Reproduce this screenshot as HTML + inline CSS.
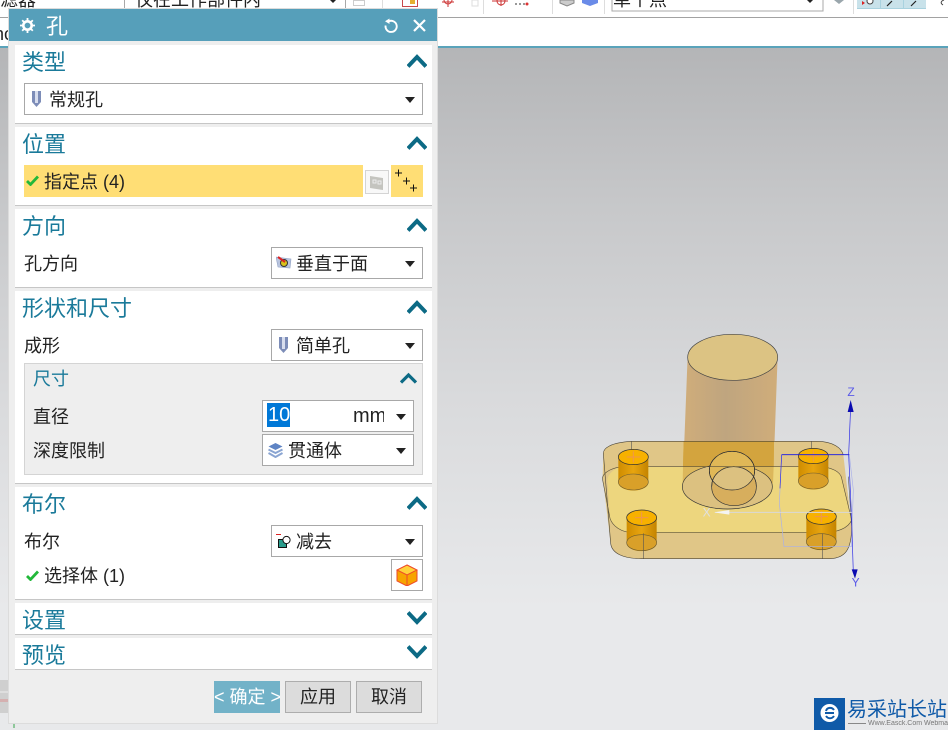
<!DOCTYPE html>
<html lang="zh"><head><meta charset="utf-8"><title>孔</title>
<style>
html,body{margin:0;padding:0}
body{width:948px;height:730px;position:relative;overflow:hidden;background:#fff;font-family:"Liberation Sans","Noto Sans CJK SC",sans-serif;color:#222}
.a{position:absolute}
.t{position:absolute;white-space:nowrap;line-height:24px;font-size:18px}
.sec{position:absolute;left:15px;width:417px;background:#fff;box-shadow:0 1px 0 #c6c6c6}
.h{position:absolute;left:22px;font-size:22px;line-height:30px;color:#1a7a9a;white-space:nowrap}
.sel{position:absolute;box-sizing:border-box;border:1px solid #a8a8a8;background:#fff;height:32px}
.sel:after{content:"";position:absolute;right:7px;top:13px;border-left:5.5px solid transparent;border-right:5.5px solid transparent;border-top:6px solid #222}
.chev{position:absolute;left:407px}
.btn{position:absolute;top:681px;width:66px;height:32px;box-sizing:border-box;border:1px solid #adadad;background:#dcdcdc;text-align:center;font-size:18px;line-height:31px}
</style></head><body>
<!-- toolbar -->
<div class="a" style="left:0;top:0;width:948px;height:17px;overflow:hidden;background:#fff">
<div class="t" style="left:-18px;top:-12px;font-size:18px">过滤器</div>
<div class="a" style="left:124px;top:-2px;width:220px;height:11px;border-right:1px solid #a8a8a8;border-left:1px solid #a8a8a8"></div>
<div class="t" style="left:135px;top:-12px">仅在工作部件内</div>
<div class="a" style="left:330px;top:0;border-left:3px solid transparent;border-right:3px solid transparent;border-top:3px solid #222"></div>
<div class="a" style="left:353px;top:0;width:12px;height:6px;border:1px solid #ccc;box-sizing:border-box"></div>
<div class="a" style="left:382px;top:0;width:1px;height:10px;background:#ddd"></div>
<div class="a" style="left:402px;top:-2px;width:14px;height:7px;border:1px solid #c8494c"></div>
<div class="a" style="left:410px;top:0;width:5px;height:4px;background:#e5b030"></div>
<svg class="a" style="left:440px;top:0" width="508" height="17" fill="none">
<circle cx="8" cy="0" r="4" stroke="#c33"/><path d="M8 0v7M2 2h12" stroke="#c33"/>
<rect x="32" y="0" width="6" height="6" stroke="#ddd"/>
<path d="M43.500 0v14" stroke="#ddd"/>
<circle cx="61" cy="1" r="4" stroke="#c33"/><path d="M61-3v9M52 1h16" stroke="#c33"/>
<path d="M75 4h12" stroke="#333" stroke-dasharray="2 2"/><circle cx="87" cy="4" r="1.500" fill="#d33"/>
<path d="M112.500 0v14M164.500 0v14" stroke="#ddd"/>
<path d="M120 0h14v3l-7 3-7-3z" fill="#ccc" stroke="#888"/>
<path d="M142 0h16v3l-8 3-8-3z" fill="#6a8be8"/>
<path d="M172 0v11h211V0" stroke="#a8a8a8"/>
<path d="M367 0h6l-3 3z" fill="#222"/>
<path d="M394 0h10l-5 4z" fill="#9aa6ac"/>
<path d="M413.500 0v14" stroke="#ddd"/>
<rect x="417" y="0" width="69" height="8.500" fill="#c9e2ea"/>
<path d="M417 8.500h69M440.500 0v8M463.500 0v8" stroke="#a9d2df"/>
<path d="M422 1l3 2-3 2z" fill="#d22"/><circle cx="430" cy="1" r="3" fill="#fff" stroke="#444"/>
<path d="M447 6l5-5M471 6l5-5" stroke="#222" stroke-width="1.200"/>
<path d="M504 0c-3 1-4 3-1 5" stroke="#444"/>
</svg>
<div class="t" style="left:613px;top:-12px">单个点</div>
</div>
<div class="a" style="left:0;top:17px;width:948px;height:1px;background:#a2a2a2"></div>
<div class="a" style="left:0;top:18px;width:948px;height:28px;background:#fff"></div>
<div class="a" style="left:-6px;top:22px;font-size:18px;line-height:24px">nc</div>
<div class="a" style="left:0;top:46px;width:948px;height:2px;background:#5aa3ba"></div>
<!-- viewport -->
<div class="a" style="left:0;top:48px;width:948px;height:682px;background:linear-gradient(#b4b5b7 0,#c8c9cb 170px,#d9dadc 350px,#e8e9eb 560px,#e8e9eb 100%)"></div>
<div class="a" style="left:0;top:680px;width:10px;height:33px;background:#cfcfcf"></div>
<div class="a" style="left:0;top:691px;width:10px;height:2px;background:#dedede"></div>
<div class="a" style="left:0;top:699px;width:10px;height:3px;background:#d5b0b0"></div>
<div class="a" style="left:13px;top:724px;width:2px;height:4px;background:#8fc79a"></div>
<!-- model -->
<svg class="a" style="left:590px;top:320px" width="290" height="280" viewBox="0 0 870 840" fill="none">
<defs>
<linearGradient id="cy" x1="0" x2="1" y1="0" y2="0"><stop offset="0" stop-color="#d0ad7a"/><stop offset=".45" stop-color="#bfa57f"/><stop offset="1" stop-color="#d0ad7a"/></linearGradient>
<linearGradient id="pg" x1="0" x2="1" y1="0" y2="0"><stop offset="0" stop-color="#cf8c00"/><stop offset=".5" stop-color="#e8a50f"/><stop offset="1" stop-color="#c48400"/></linearGradient>
<clipPath id="up"><ellipse cx="426" cy="452" rx="68" ry="58"/></clipPath>
</defs>
<path d="M293 107L278 490c0 40 270 40 271 0L563 107z" fill="url(#cy)"/>
<ellipse cx="428" cy="112" rx="135" ry="69" fill="#dcc383" stroke="#444" stroke-width="2"/>
<path d="M125 364H680C730 364 755 385 760 405L785 620C785 690 765 714 720 716H155C100 716 65 700 62 670L38 470 40 400C40 385 60 368 125 364z" fill="#e0c687"/>
<path d="M281 364H552L550 490H278z" fill="#d3a43e"/>
<path d="M100 440H690C725 442 752 455 755 475L785 600C775 625 740 638 700 638H125C95 636 68 620 60 595L52 480C55 458 80 441 100 440z" fill="#edd67e"/>
<path d="M281 364H552L551 440H279z" fill="#d3a43e"/>
<path d="M279 440H551L549 490H278z" fill="#dcb75b"/>
<ellipse cx="412" cy="500" rx="135" ry="67" fill="#dcc180" stroke="#333" stroke-width="2"/>
<ellipse cx="426" cy="452" rx="68" ry="58" fill="#e0b857" stroke="#333" stroke-width="2"/>
<path d="M365 500c0-35 30-60 66-60 38 0 68 25 68 60 0 35-30 57-67 57-37 0-67-22-67-57z" fill="#d7ae5d" stroke="#333" stroke-width="2"/>
<ellipse cx="432" cy="500" rx="67" ry="60" fill="#dcc180" clip-path="url(#up)"/>
<path d="M365 500c0-35 30-60 66-60 38 0 68 25 68 60" stroke="#333" stroke-width="2"/>
<ellipse cx="426" cy="452" rx="68" ry="58" stroke="#333" stroke-width="2"/>
<path d="M125 364H680C730 364 755 385 760 405M785 620C785 690 765 714 720 716H155C100 716 65 700 62 670L40 400C40 385 60 368 125 364" stroke="#4a4436" stroke-width="1.800"/>
<path d="M37 475C40 455 70 442 100 440H690C725 442 752 455 755 475L785 600C775 625 740 638 700 638H125C95 636 68 620 60 595L37 475z" stroke="#554d38" stroke-width="1.800"/>
<path d="M775 470L785 620M124 364V392M665 364V388" stroke="#555" stroke-width="1.800"/>
<g id="p1"><path d="M85 411V486c0 34 90 34 90 0V411z" fill="url(#pg)"/><ellipse cx="130" cy="486" rx="45" ry="24" fill="#d9a029" stroke="#6a5a30" stroke-width="1.800"/><ellipse cx="130" cy="411" rx="45" ry="23" fill="#f7b100" stroke="#333" stroke-width="2.200"/><path d="M130 394v34M110 411h40" stroke="#f2954c" stroke-width="3"/></g>
<use href="#p1" x="540" y="-3"/><use href="#p1" x="25" y="182"/><use href="#p1" x="564" y="179"/>
<path d="M698 640V716M160 640V716" stroke="#555" stroke-width="1.800"/>
<path d="M575 404H778L790 510 784 680H582L568 550z" stroke="#a9b0e8" stroke-width="2"/>
<path d="M575 404H778" stroke="#1616e0" stroke-width="2.500"/><path d="M575 404L570 505" stroke="#2a2ae8" stroke-width="2"/>
<path d="M782 260L776 404 785 600 790 760" stroke="#2929e6" stroke-width="2"/>
<path d="M782 240l-9 36h18z" fill="#0a0ab0"/><path d="M785 748h18l-8 28z" fill="#0a0ab0"/>
<path d="M375 577H785" stroke="#d8d8d8" stroke-width="3"/><path d="M372 577l46-7v14z" fill="#f4f4f4"/>
<text x="338" y="590" font-size="36" fill="#e0e0e0" font-family="Liberation Sans">X</text>
<text x="772" y="228" font-size="36" fill="#5a5ae8" font-family="Liberation Sans">Z</text>
<text x="785" y="800" font-size="36" fill="#5a5ae8" font-family="Liberation Sans">Y</text>
</svg>
<!-- dialog -->
<div class="a" style="left:9px;top:9px;width:428px;height:714px;background:#eee;box-shadow:0 0 0 1px #dcdcdc"></div>
<div class="a" style="left:9px;top:9px;width:428px;height:32px;background:#569fba"></div>
<svg class="a" style="left:20px;top:18px" width="15" height="15" viewBox="0 0 15 15"><circle cx="7.500" cy="7.500" r="4.200" fill="none" stroke="#fff" stroke-width="2.600"/><path d="M7.500 0v3M7.500 12v3M0 7.500h3M12 7.500h3M2.200 2.200l2 2M10.800 10.800l2 2M12.800 2.200l-2 2M4.200 10.800l-2 2" stroke="#fff" stroke-width="1.800"/></svg>
<div class="t" style="left:46px;top:14px;font-size:22px;color:#fff;line-height:26px">孔</div>
<svg class="a" style="left:383px;top:18px" width="16" height="16" viewBox="0 0 16 16" fill="none"><path d="M6 3.200A5.600 5.600 0 1 1 2.600 7.500" stroke="#fff" stroke-width="1.900"/><path d="M6.500 .5v5.500L2 3.200z" fill="#fff"/></svg>
<svg class="a" style="left:413px;top:19px" width="13" height="13" viewBox="0 0 13 13"><path d="M1 1l11 11M12 1L1 12" stroke="#fff" stroke-width="2.200"/></svg>

<div class="sec" style="top:45px;height:78px"></div>
<div class="sec" style="top:127px;height:78px"></div>
<div class="sec" style="top:209px;height:78px"></div>
<div class="sec" style="top:291px;height:192px"></div>
<div class="sec" style="top:487px;height:112px"></div>
<div class="sec" style="top:603px;height:31px"></div>
<div class="sec" style="top:638px;height:31px"></div>

<div class="h" style="top:48px">类型</div>
<div class="h" style="top:130px">位置</div>
<div class="h" style="top:212px">方向</div>
<div class="h" style="top:294px">形状和尺寸</div>
<div class="h" style="top:490px">布尔</div>
<div class="h" style="top:606px">设置</div>
<div class="h" style="top:641px">预览</div>

<svg class="chev" style="top:54px" width="20" height="14"><path d="M1 12.500L10 3l9 9.500" fill="none" stroke="#0c6a85" stroke-width="4"/></svg>
<svg class="chev" style="top:136px" width="20" height="14"><path d="M1 12.500L10 3l9 9.500" fill="none" stroke="#0c6a85" stroke-width="4"/></svg>
<svg class="chev" style="top:218px" width="20" height="14"><path d="M1 12.500L10 3l9 9.500" fill="none" stroke="#0c6a85" stroke-width="4"/></svg>
<svg class="chev" style="top:300px" width="20" height="14"><path d="M1 12.500L10 3l9 9.500" fill="none" stroke="#0c6a85" stroke-width="4"/></svg>
<svg class="chev" style="top:496px" width="20" height="14"><path d="M1 12.500L10 3l9 9.500" fill="none" stroke="#0c6a85" stroke-width="4"/></svg>
<svg class="chev" style="top:611px" width="20" height="14"><path d="M1 1.500L10 11l9-9.500" fill="none" stroke="#0c6a85" stroke-width="4"/></svg>
<svg class="chev" style="top:645px" width="20" height="14"><path d="M1 1.500L10 11l9-9.500" fill="none" stroke="#0c6a85" stroke-width="4"/></svg>

<!-- type -->
<div class="sel" style="left:24px;top:83px;width:399px"></div>
<svg class="a" style="left:32px;top:91px" width="9" height="16" viewBox="0 0 9 16"><path d="M0 0h9v11l-4.500 5L0 11z" fill="#7d8db8"/><path d="M3 0h3v12H3z" fill="#d8deee"/></svg>
<div class="t" style="left:49px;top:88px">常规孔</div>
<!-- position -->
<div class="a" style="left:24px;top:165px;width:339px;height:32px;background:#ffde75"></div>
<svg class="a" style="left:26px;top:175px" width="13" height="11" viewBox="0 0 13 11"><path d="M1 6l3.500 3.500L12 1.500" fill="none" stroke="#22b83a" stroke-width="2.800"/></svg>
<div class="t" style="left:44px;top:170px">指定点 (4)</div>
<div class="a" style="left:365px;top:170px;width:24px;height:24px;box-sizing:border-box;border:1px solid #d4d4d4;background:#f8f8f8"></div>
<svg class="a" style="left:369px;top:175px" width="16" height="15"><path d="M1 1l13 2v12L1 13z" fill="#c4c4bf"/><path d="M4 5h3v3H4zM9 6h3v3H9z" fill="none" stroke="#ececec"/></svg>
<div class="a" style="left:391px;top:165px;width:32px;height:32px;background:#ffde75"></div>
<svg class="a" style="left:391px;top:165px" width="32" height="32"><path d="M4 8h7M7.500 4.500v7M12 16h7M15.500 12.500v7M19 23h7M22.500 19.500v7" stroke="#111" stroke-width="1"/></svg>
<!-- direction -->
<div class="t" style="left:24px;top:252px">孔方向</div>
<div class="sel" style="left:271px;top:247px;width:152px"></div>
<svg class="a" style="left:276px;top:256px" width="16" height="13" viewBox="0 0 16 13"><path d="M0 1l15 2-1 9L2 11z" fill="#b9c4de" stroke="#8fa0c4" stroke-width=".6"/><circle cx="8" cy="7" r="3.500" fill="#d8c21c" stroke="#333"/><path d="M2 1l7 5" stroke="#d22" stroke-width="2"/></svg>
<div class="t" style="left:296px;top:252px">垂直于面</div>
<!-- shape -->
<div class="t" style="left:24px;top:334px">成形</div>
<div class="sel" style="left:271px;top:329px;width:152px"></div>
<svg class="a" style="left:279px;top:337px" width="9" height="16" viewBox="0 0 9 16"><path d="M0 0h9v11l-4.500 5L0 11z" fill="#7d8db8"/><path d="M3 0h3v12H3z" fill="#d8deee"/></svg>
<div class="t" style="left:296px;top:334px">简单孔</div>
<div class="a" style="left:24px;top:363px;width:399px;height:112px;box-sizing:border-box;border:1px solid #d4d4d4;background:#eee"></div>
<div class="t" style="left:33px;top:367px;color:#1a7a9a">尺寸</div>
<svg class="a" style="left:400px;top:372px" width="17" height="12"><path d="M1 10.500L8.500 3l7.500 7.500" fill="none" stroke="#0c6a85" stroke-width="3.200"/></svg>
<div class="t" style="left:33px;top:405px">直径</div>
<div class="sel" style="left:262px;top:400px;width:152px"></div>
<div class="a" style="left:267px;top:403px;width:23px;height:24px;background:#0078d7"></div>
<div class="t" style="left:268px;top:403px;color:#fff;font-size:20px">10</div>
<div class="a" style="left:353px;top:404px;width:31px;height:24px;overflow:hidden;font-size:20px;line-height:24px;white-space:nowrap">mm</div>
<div class="t" style="left:33px;top:439px">深度限制</div>
<div class="sel" style="left:262px;top:434px;width:152px"></div>
<svg class="a" style="left:268px;top:443px" width="15" height="15" viewBox="0 0 15 15"><path d="M7.500 0l7 3.500-7 3.500-7-3.500z" fill="#5f84c4"/><path d="M.5 6.500l7 3.500 7-3.500M.5 10l7 4 7-4" fill="none" stroke="#8aa5d2" stroke-width="2"/></svg>
<div class="t" style="left:288px;top:439px">贯通体</div>
<!-- boolean -->
<div class="t" style="left:24px;top:530px">布尔</div>
<div class="sel" style="left:271px;top:525px;width:152px"></div>
<svg class="a" style="left:276px;top:534px" width="16" height="15" viewBox="0 0 16 15"><path d="M0 .5h5" stroke="#d22"/><rect x="2.500" y="5.500" width="8" height="8" fill="#2a9c8c" stroke="#111"/><circle cx="10.500" cy="6" r="3.600" fill="#fff" stroke="#111"/></svg>
<div class="t" style="left:296px;top:530px">减去</div>
<svg class="a" style="left:26px;top:570px" width="13" height="11" viewBox="0 0 13 11"><path d="M1 6l3.500 3.500L12 1.500" fill="none" stroke="#22b83a" stroke-width="2.800"/></svg>
<div class="t" style="left:44px;top:564px">选择体 (1)</div>
<div class="a" style="left:391px;top:559px;width:32px;height:32px;box-sizing:border-box;border:1px solid #a8a8a8;background:#fff"></div>
<svg class="a" style="left:396px;top:564px" width="22" height="22" viewBox="0 0 22 22"><path d="M11 1l10 5v11l-10 5-10-5V6z" fill="#f7a400" stroke="#ee4a2a"/><path d="M1 6l10 5 10-5-10-5z" fill="#ffd23a" stroke="#ee4a2a"/><path d="M11 11v11" stroke="#ee4a2a"/></svg>
<!-- buttons -->
<div class="a" style="left:214px;top:681px;width:66px;height:32px;background:#72b2c8;color:#fff;text-align:center;font-size:18px;line-height:33px;white-space:nowrap;overflow:hidden">&lt; 确定 &gt;</div>
<div class="btn" style="left:285px">应用</div>
<div class="btn" style="left:356px">取消</div>
<!-- watermark -->
<div class="a" style="left:814px;top:698px;width:31px;height:32px;background:#0f5aa8"></div>
<svg class="a" style="left:814px;top:698px" width="31" height="32" viewBox="0 0 31 32"><circle cx="15.500" cy="15" r="9" fill="#fff"/><path d="M11 15h9M20 12c-2-3-7-3-8 1M12 18c2 3 6 3 8 0" fill="none" stroke="#0f5aa8" stroke-width="2"/></svg>
<div class="a" style="left:847px;top:698px;font-size:20px;line-height:24px;color:#0f5aa8;white-space:nowrap">易采站长站</div>
<div class="a" style="left:848px;top:723px;width:18px;height:1px;background:#888"></div>
<div class="a" style="left:868px;top:720px;width:80px;height:8px;overflow:hidden;font-size:7px;line-height:8px;color:#777;white-space:nowrap">Www.Easck.Com Webmaster</div>
</body></html>
